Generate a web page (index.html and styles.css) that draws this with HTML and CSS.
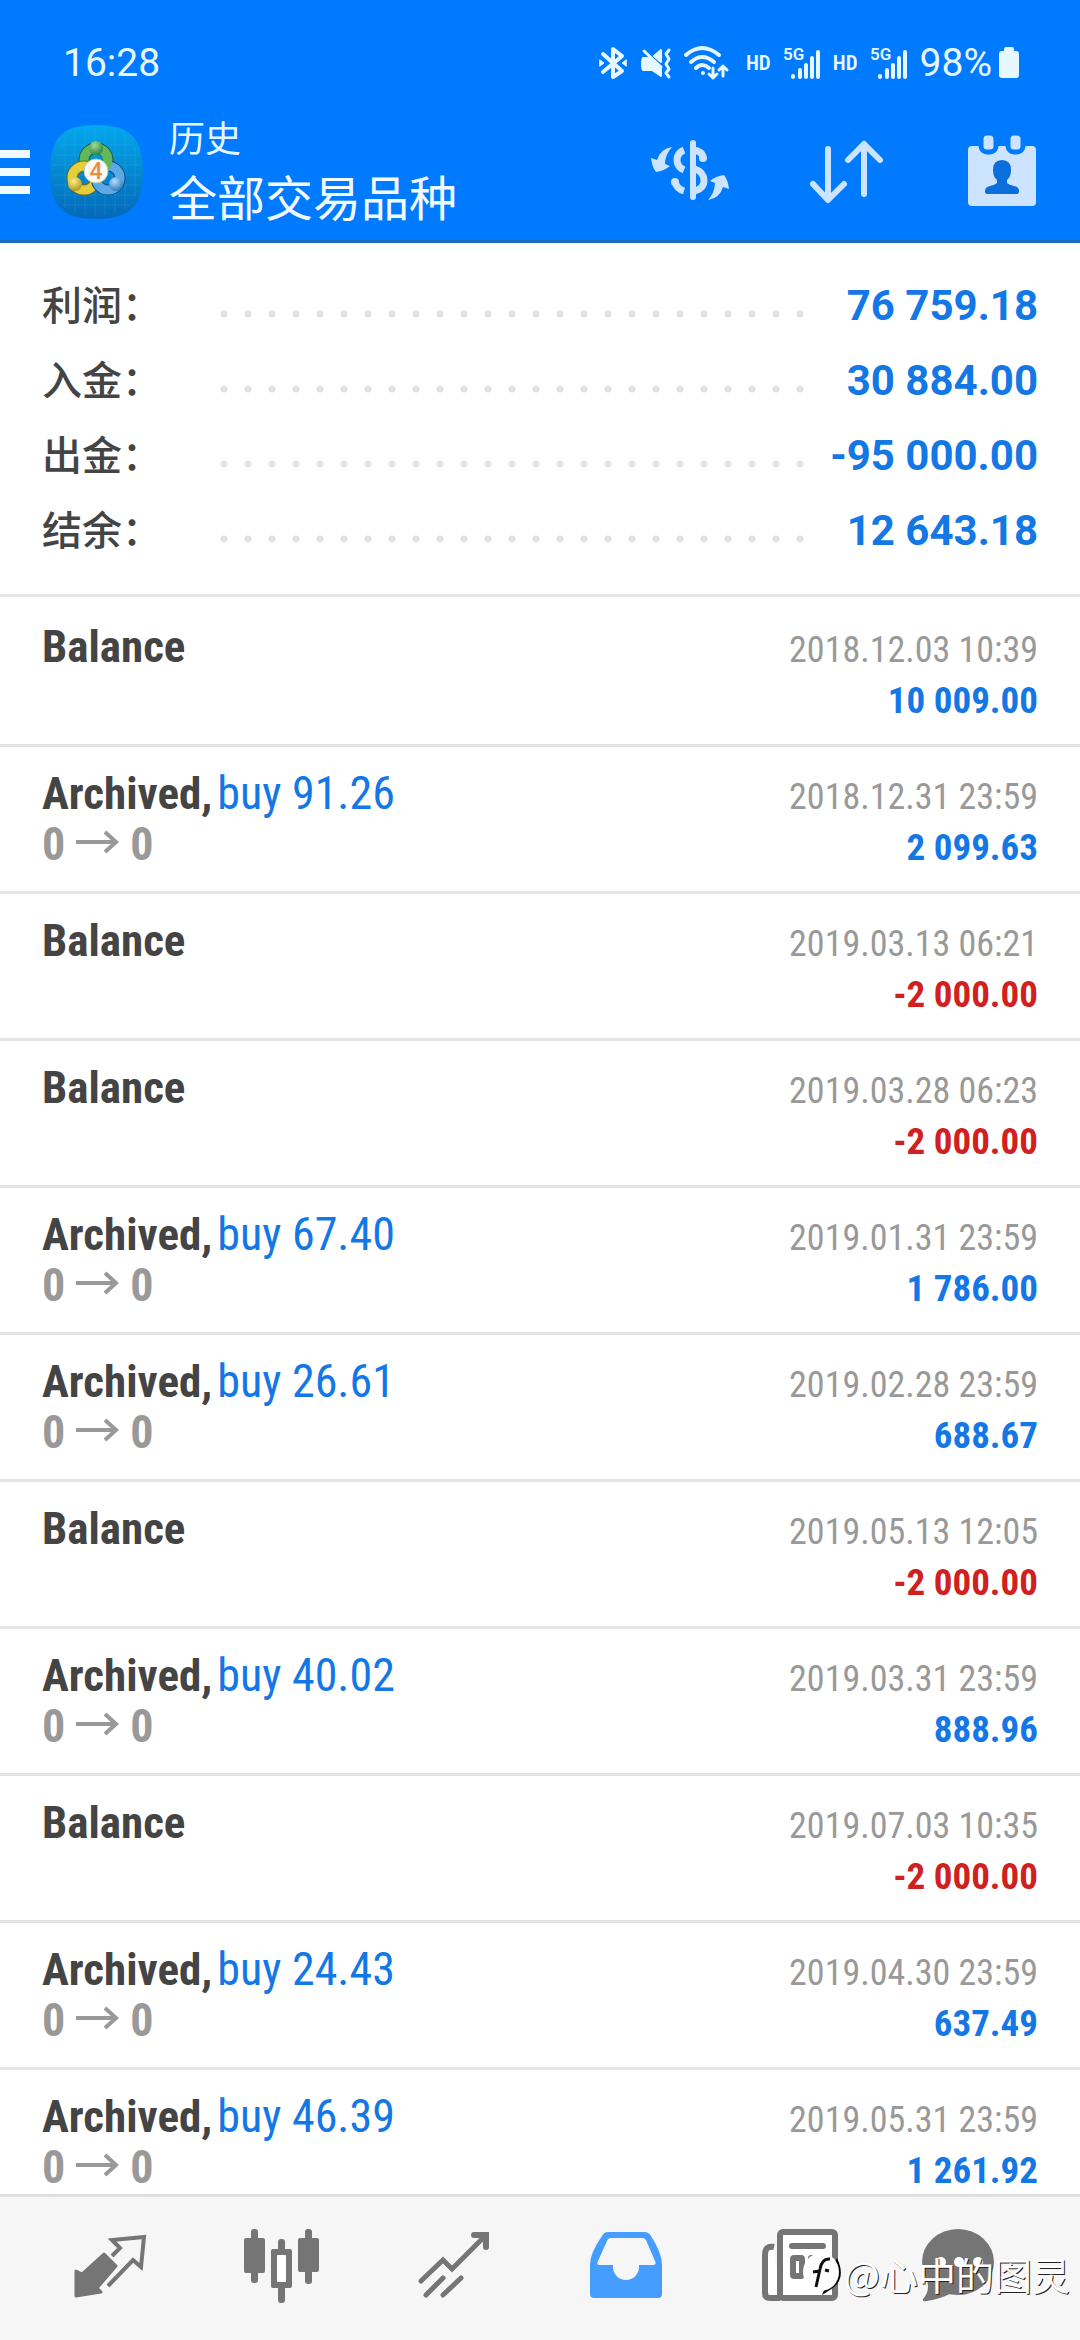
FILE: index.html
```html
<!DOCTYPE html>
<html lang="zh-CN">
<head>
<meta charset="utf-8">
<meta name="viewport" content="width=device-width">
<title>历史</title>
<link rel="stylesheet" href="styles.css">
</head>
<body>
<div class="app">
  <header class="header">
    <div class="status">
      <time class="clock">16:28</time>
      <div class="status-icons">
        <svg width="30" height="34" viewBox="0 0 30 34" fill="none" stroke="#e6f7ff" stroke-width="4" stroke-linejoin="round" stroke-linecap="round"><path d="M4 8L23 25L14 31V3L23 10L4 26"/><path d="M1 14l4 3l-4 3zM27 14l-4 3l4 3z" fill="#e6f7ff" stroke-width="1"/></svg>
        <svg width="31" height="34" viewBox="0 0 31 34" fill="#e6f7ff" stroke="#e6f7ff" stroke-linejoin="round" stroke-linecap="round"><path d="M2 12H8L20 23V30L11 24H2Q1 24 1 18Q1 12 2 12ZM13 10L20 4V16Z" stroke-width="2"/><path d="M3 5L20 21" stroke-width="3"/><path d="M28 4l-3 4l3 5l-3 5l3 5l-3 4l3 4" fill="none" stroke-width="3"/></svg>
        <svg width="50" height="34" viewBox="0 0 50 34" fill="none" stroke="#e6f7ff" stroke-width="3" stroke-linecap="round" stroke-linejoin="round"><path d="M2 9Q18 -5 35 9M7 16Q18 6 30 16M12 22Q18 16 25 22" stroke-width="4"/><circle cx="19" cy="27" r="2" fill="#e6f7ff" stroke="none"/><path d="M29 22V32M25 28L29 32L33 28M39 30V20M35 24L39 20L43 24"/></svg>
        <span class="hd">HD</span>
        <svg width="38" height="34" viewBox="0 0 38 34" fill="none" stroke="#e6f7ff" stroke-width="4" stroke-linecap="round"><text class="net" x="0" y="14">5G</text><path d="M10 31v-1M17 31v-7M23 31V19M29 31V12M35 31V6"/></svg>
        <span class="hd">HD</span>
        <svg width="38" height="34" viewBox="0 0 38 34" fill="none" stroke="#e6f7ff" stroke-width="4" stroke-linecap="round"><text class="net" x="0" y="14">5G</text><path d="M10 31v-1M17 31v-7M23 31V19M29 31V12M35 31V6"/></svg>
        <span class="battery"><span>98%</span>
        <svg width="20" height="32" viewBox="0 0 20 32" fill="#e6f7ff"><path d="M5 4V2Q5 0 7 0H13Q15 0 15 2V4H17Q20 4 20 7V28Q20 31 17 31H3Q0 31 0 28V7Q0 4 3 4Z"/></svg></span>
      </div>
    </div>
    <div class="appbar">
      <button class="menu" aria-label="菜单"><svg width="30" height="44" viewBox="0 0 30 44" fill="#f0faff"><path d="M0 0H30V8H0ZM0 18H30V26H0ZM0 36H30V44H0Z"/></svg></button>
      <svg class="logo" width="93" height="94" viewBox="0 0 93 94">
        <defs>
          <linearGradient id="tile" x1="0" y1="0" x2="0" y2="1"><stop offset="0" stop-color="#04a8ee"/><stop offset=".5" stop-color="#0488d0"/><stop offset="1" stop-color="#0468b8"/></linearGradient>
          <radialGradient id="g" cx=".4" cy=".3" r=".8"><stop offset="0" stop-color="#a4dc90"/><stop offset="1" stop-color="#1f7a38"/></radialGradient>
          <radialGradient id="y" cx=".4" cy=".3" r=".8"><stop offset="0" stop-color="#fbf08a"/><stop offset="1" stop-color="#a98a10"/></radialGradient>
          <radialGradient id="b" cx=".4" cy=".3" r=".8"><stop offset="0" stop-color="#b4e0ff"/><stop offset="1" stop-color="#1d6db4"/></radialGradient>
        </defs>
        <path d="M46 0C80 0 93 13 93 47S80 94 46 94S0 81 0 47S12 0 46 0Z" fill="url(#tile)"/>
        <path d="M15 12V82M25 6V88M35 4V90M45 3V91M55 4V90M65 6V88M75 10V84M85 22V72M8 20H84M4 30H89M3 40H90M3 50H90M4 60H89M7 70H86M12 80H80" stroke="#45c3f0" stroke-opacity=".2" fill="none"/>
        <g fill="none" stroke-linecap="round">
          <circle cx="46" cy="35" r="12" stroke="#175c2c" stroke-width="11"/><circle cx="46" cy="35" r="12" stroke="#62b85c" stroke-width="9"/>
          <circle cx="34" cy="53" r="12" stroke="#7a6a10" stroke-width="11"/><circle cx="34" cy="53" r="12" stroke="#e3cf3c" stroke-width="9"/>
          <circle cx="58" cy="53" r="12" stroke="#0e4884" stroke-width="11"/><circle cx="58" cy="53" r="12" stroke="#5aaae6" stroke-width="9"/>
          <path d="M50 24A12 12 0 0 1 56 41" stroke="#62b85c" stroke-width="9"/>
        </g>
        <circle cx="46" cy="23" r="7" fill="url(#g)"/><circle cx="25" cy="59" r="7" fill="url(#y)"/><circle cx="66" cy="59" r="7" fill="url(#b)"/>
        <circle cx="46" cy="46" r="12" fill="#fffaf4" stroke="#b9c6b0"/>
        <text class="logo-digit" x="46" y="54" text-anchor="middle">4</text>
      </svg>
      <div class="titles">
        <span class="subtitle">历史</span>
        <h1 class="title">全部交易品种</h1>
      </div>
      <div class="actions">
        <button aria-label="交易品种"><svg width="90" height="90" viewBox="0 0 90 90" fill="none" stroke="#cce4ff" stroke-width="7"><path d="M48 16V70" stroke-width="6" stroke-linecap="round"/><path d="M39 23Q32 26 32 33Q32 40 39 43M48 23Q57 24 58 30"/><path d="M30 55Q32 62 39 64M58 30v1M50 42Q59 45 59 54Q59 61 50 64" /><circle cx="58" cy="31" r="4" fill="#cce4ff" stroke="none"/><circle cx="30" cy="55" r="4" fill="#cce4ff" stroke="none"/><g fill="#cce4ff" stroke="none"><path id="swap" d="M27 20Q15 22 12 33L6 31Q7 40 11 45Q19 44 25 39L20 37Q20 28 27 20Z"/><use href="#swap" transform="rotate(180 45 46.5)"/></g></svg></button>
        <button aria-label="排序"><svg width="90" height="90" viewBox="0 0 90 90" fill="none" stroke="#cce4ff" stroke-width="6" stroke-linecap="round" stroke-linejoin="round"><path d="M27 22V72M12 57L27 73L43 57M63 67V17M47 33L63 17L79 33"/></svg></button>
        <button aria-label="时间范围"><svg width="90" height="90" viewBox="0 0 90 90"><rect x="11" y="19" width="68" height="60" rx="4" fill="#cce4ff"/><g fill="#cce4ff" stroke="#007aff" stroke-width="5"><rect x="24" y="6" width="15" height="19" rx="6"/><rect x="51" y="6" width="15" height="19" rx="6"/></g><path d="M45 33Q54 33 54 43Q54 50 50 53V56Q52 58 57 59Q62 60 62 64Q62 67 60 67H30Q28 67 28 64Q28 60 33 59Q38 58 40 56V53Q36 50 36 43Q36 33 45 33Z" fill="#0a6fdd"/></svg></button>
      </div>
    </div>
  </header>

  <main class="content">
    <dl class="summary">
      <div><dt>利润：</dt><dd>76 759.18</dd></div>
      <div><dt>入金：</dt><dd>30 884.00</dd></div>
      <div><dt>出金：</dt><dd>-95 000.00</dd></div>
      <div><dt>结余：</dt><dd>12 643.18</dd></div>
    </dl>
    <svg width="0" height="0" class="defs"><symbol id="arrow" viewBox="0 0 43 36"><path d="M0 18H41M29 8L40 18L29 28" fill="none" stroke="#999" stroke-width="4"/></symbol></svg>
    <ul class="deals">
      <li><b>Balance</b><time>2018.12.03 10:39</time><span class="amount">10 009.00</span></li>
      <li><b>Archived,<i>buy 91.26</i></b><time>2018.12.31 23:59</time><span class="price">0<svg><use href="#arrow"/></svg>0</span><span class="amount">2 099.63</span></li>
      <li><b>Balance</b><time>2019.03.13 06:21</time><span class="amount loss">-2 000.00</span></li>
      <li><b>Balance</b><time>2019.03.28 06:23</time><span class="amount loss">-2 000.00</span></li>
      <li><b>Archived,<i>buy 67.40</i></b><time>2019.01.31 23:59</time><span class="price">0<svg><use href="#arrow"/></svg>0</span><span class="amount">1 786.00</span></li>
      <li><b>Archived,<i>buy 26.61</i></b><time>2019.02.28 23:59</time><span class="price">0<svg><use href="#arrow"/></svg>0</span><span class="amount">688.67</span></li>
      <li><b>Balance</b><time>2019.05.13 12:05</time><span class="amount loss">-2 000.00</span></li>
      <li><b>Archived,<i>buy 40.02</i></b><time>2019.03.31 23:59</time><span class="price">0<svg><use href="#arrow"/></svg>0</span><span class="amount">888.96</span></li>
      <li><b>Balance</b><time>2019.07.03 10:35</time><span class="amount loss">-2 000.00</span></li>
      <li><b>Archived,<i>buy 24.43</i></b><time>2019.04.30 23:59</time><span class="price">0<svg><use href="#arrow"/></svg>0</span><span class="amount">637.49</span></li>
      <li><b>Archived,<i>buy 46.39</i></b><time>2019.05.31 23:59</time><span class="price">0<svg><use href="#arrow"/></svg>0</span><span class="amount">1 261.92</span></li>
    </ul>
  </main>

  <nav class="tabs">
    <button aria-label="行情"><svg viewBox="0 0 96 96"><path d="M42 33L54 45L35 67L39 71L14 75V50L20 53Z" fill="#757575" stroke="#757575" stroke-width="3" stroke-linejoin="round"/><path d="M50 35L58 27L50 19L82 16L79 46L71 39L46 65" fill="none" stroke="#757575" stroke-width="4"/></svg></button>
    <button aria-label="图表"><svg viewBox="0 0 96 96" fill="#757575"><rect x="10" y="17" width="21" height="35" rx="2"/><rect x="17" y="8" width="7" height="54" rx="3"/><rect x="37" y="28" width="21" height="39" rx="2"/><rect x="44" y="18" width="7" height="64" rx="3"/><rect x="43" y="34" width="9" height="27" rx="1" fill="#fff"/><rect x="64" y="17" width="21" height="34" rx="2"/><rect x="71" y="8" width="7" height="55" rx="3"/></svg></button>
    <button aria-label="交易"><svg viewBox="0 0 96 96" fill="none" stroke="#757575" stroke-width="5" stroke-linecap="round"><path d="M15 60L37 39L46 48L79 15" stroke-linejoin="miter"/><path d="M68 14H80V26" stroke-width="6"/><path d="M20 74L37 57M37 74L55 57"/></svg></button>
    <button aria-label="历史" aria-current="page"><svg viewBox="0 0 96 96" fill="#459dff" fill-rule="evenodd"><path d="M24 15Q26 11 30 11H66Q71 11 73 15Q84 32 84 44V73Q84 77 80 77H16Q12 77 12 73V44Q12 32 24 15ZM33 17H64Q67 17 68 19L77 40Q79 44 75 44H61V46A13 13 0 0 1 35 46V44H21Q18 44 20 40L29 20Q30 17 33 17Z"/></svg></button>
    <button aria-label="新闻"><svg viewBox="0 0 96 96" fill="none" stroke="#757575" stroke-width="6"><path d="M24 26Q15 24 15 34V72Q15 77 20 77H30" fill="#fff"/><rect x="30" y="11" width="55" height="66" rx="3" fill="#fff"/><path d="M42 25H73M61 37H73" stroke-linecap="round"/><rect x="43" y="37" width="9" height="18" rx="1"/></svg></button>
    <button aria-label="信息"><svg viewBox="0 0 96 96"><ellipse cx="36" cy="41" rx="36" ry="33" fill="#757575"/><path d="M3 54Q10 68 1 78Q0 81 5 80Q18 78 30 72Z" fill="#757575"/><g fill="#fff"><circle cx="19" cy="41" r="5"/><circle cx="37" cy="41" r="5"/><circle cx="56" cy="41" r="5"/></g></svg></button>
    <div class="watermark">
      <svg viewBox="0 0 40 44"><path d="M34 6Q43 25 31 35Q27 38 19 43L21 38Q36 32 32 10Z" fill="#000"/><ellipse cx="18" cy="20" rx="18" ry="19" fill="#fff"/><path d="M27 7Q19 6 17 17L13 35M10 20L16 19M22 18L26 19" fill="none" stroke="#111" stroke-width="3"/></svg>
      <span>@心中的图灵</span>
    </div>
  </nav>
</div>
</body>
</html>
```
FILE: styles.css
```css
* {
  box-sizing: border-box;
}

body {
  margin: 0;
  background: #fff;
  color: #444;
  font-family: Roboto, "Noto Sans CJK SC", sans-serif;
}

svg {
  display: block;
  flex: none;
  overflow: visible;
}

button {
  display: grid;
  place-items: center;
  margin: 0;
  padding: 0;
  border: 0;
  background: none;
}

.app {
  display: flex;
  flex-direction: column;
  height: 100vh;
}

/* Header */

.header {
  flex: none;
  border-bottom: 3px solid #1a6bbd;
  background: #007aff;
  color: #e6f7ff;
}

.status {
  display: flex;
  align-items: center;
  justify-content: space-between;
  height: 84px;
  padding: 42px 61px 0 63px;
  font-size: 39px;
  line-height: 42px;
}

.status-icons,
.battery {
  display: flex;
  align-items: center;
}

.status-icons {
  gap: 12px;
}

.battery {
  gap: 7px;
}

.hd {
  font-family: "Roboto Condensed", Roboto, sans-serif;
  font-size: 21px;
  font-weight: 600;
}

.net {
  fill: #e6f7ff;
  stroke: none;
  font-size: 17px;
  font-weight: 600;
}

.appbar {
  display: flex;
  align-items: center;
  height: 156px;
  padding-top: 20px;
}

.logo {
  margin: 0 26px 0 20px;
}

.logo-digit {
  fill: #f08a3c;
  font-size: 23px;
  font-weight: 500;
}

.titles {
  display: flex;
  flex: 1;
  flex-direction: column;
}

.subtitle {
  font-size: 36px;
  line-height: 56px;
}

.title {
  margin: 0;
  color: #f4fbff;
  font-size: 48px;
  font-weight: 400;
  line-height: 64px;
}

.actions {
  display: flex;
}

.actions button {
  width: 156px;
}

/* Account summary */

.content {
  flex: 1;
  min-height: 0;
  overflow: hidden;
}

.summary {
  margin: 0;
  padding: 25px 42px 26px;
  border-bottom: 3px solid #e4e4e4;
}

.summary div {
  display: flex;
  align-items: center;
  height: 75px;
  font-size: 42px;
}

.summary div::before {
  flex: 1;
  order: 1;
  height: 8px;
  margin-top: 17px;
  background: radial-gradient(circle, #e2e2e2 3px, transparent 4px) 0 0 / 24px 8px;
  content: "";
}

.summary dt {
  width: 170px;
  padding-bottom: 5px;
  font-family: "Noto Sans CJK SC", sans-serif;
  font-size: 40px;
  font-weight: 500;
}

.summary dd {
  order: 2;
  width: 226px;
  margin: 0;
  color: #1477e6;
  font-weight: 700;
  text-align: right;
}

/* Deals */

.defs {
  position: absolute;
}

.deals {
  margin: 0;
  padding: 3px 0 0;
  font-family: "Roboto Condensed", Roboto, sans-serif;
  font-size: 46px;
  line-height: 51px;
  list-style: none;
}

.deals li {
  display: grid;
  grid-template-columns: 1fr auto;
  grid-template-rows: 51px 51px;
  align-items: baseline;
  height: 147px;
  padding: 21px 42px 0;
  border-bottom: 3px solid #e4e4e4;
}

.deals b {
  font-size: 45px;
}

.deals i {
  margin-left: 5px;
  color: #1477e6;
  font-size: 46px;
  font-style: normal;
  font-weight: 400;
}

.deals time {
  color: #999;
  font-size: 37px;
  font-size: 36px;
  text-align: right;
}

.price {
  display: flex;
  gap: 11px;
  align-items: baseline;
  color: #999;
  font-weight: 700;
}

.price svg {
  width: 43px;
  height: 36px;
}

.amount {
  grid-column: 2;
  align-self: start;
  color: #1477e6;
  font-size: 37px;
  font-weight: 700;
  line-height: 57px;
  text-align: right;
}

.loss {
  color: #d02020;
}

/* Bottom tabs */

.tabs {
  position: relative;
  display: grid;
  flex: none;
  grid-template-columns: repeat(6, 1fr);
  padding: 24px 24px 23px;
  border-top: 3px solid #e0e0e0;
  background: #f6f6f6;
}

.tabs svg {
  width: 96px;
  height: 96px;
}

.watermark {
  position: absolute;
  right: 10px;
  bottom: 42px;
  display: flex;
  gap: 1px;
  align-items: center;
  color: #fff;
  font-family: "Noto Sans CJK SC", sans-serif;
  font-size: 38px;
  font-weight: 400;
  line-height: 48px;
  text-shadow: 1px 1px 0 #222;
}

.tabs .watermark svg {
  width: 40px;
  height: 44px;
}
```
